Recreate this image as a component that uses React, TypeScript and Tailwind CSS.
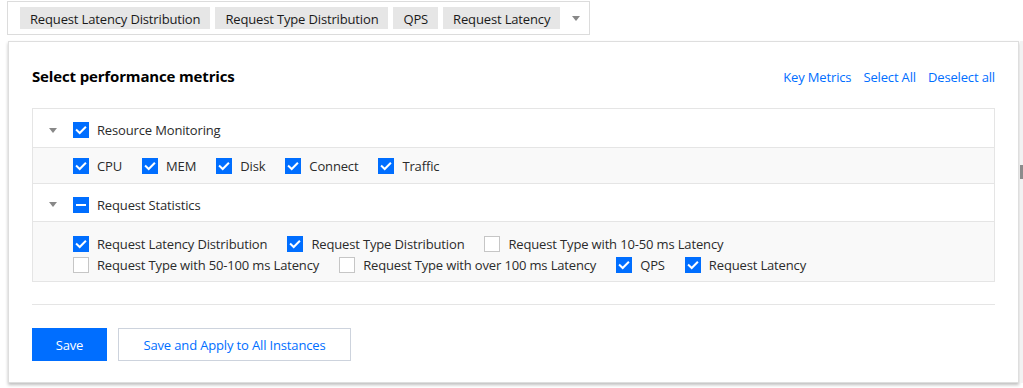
import React from "react"

type CheckState = "checked" | "unchecked" | "indeterminate"

function Checkbox({ state }: { state: CheckState }) {
  if (state === "unchecked") {
    return <span className="box-border block h-4 w-4 shrink-0 border border-[#c6c6c6] bg-white" />
  }
  return (
    <span className="flex h-4 w-4 shrink-0 items-center justify-center bg-[#006eff]">
      {state === "checked" ? (
        <svg width="16" height="16" viewBox="0 0 16 16" fill="none">
          <path d="M3.8 8.2l2.9 2.8 5.5-5.6" stroke="#fff" strokeWidth="2" strokeLinecap="square" />
        </svg>
      ) : (
        <span className="block h-[2px] w-[10px] bg-white" />
      )}
    </span>
  )
}

function CheckItem({ label, state }: { label: string; state: CheckState }) {
  return (
    <label className="mr-5 flex h-[21px] items-center">
      <Checkbox state={state} />
      <span className="ml-2 whitespace-nowrap pt-[2px] text-[#2b2b2b]">{label}</span>
    </label>
  )
}

function Caret() {
  return (
    <svg width="8" height="5" viewBox="0 0 8 5" className="shrink-0">
      <polygon points="0,0 8,0 4,5" fill="#888" />
    </svg>
  )
}

const selectedTags = ["Request Latency Distribution", "Request Type Distribution", "QPS", "Request Latency"]

const resourceItems: { label: string; state: CheckState }[] = [
  { label: "CPU", state: "checked" },
  { label: "MEM", state: "checked" },
  { label: "Disk", state: "checked" },
  { label: "Connect", state: "checked" },
  { label: "Traffic", state: "checked" },
]

const requestItems: { label: string; state: CheckState }[] = [
  { label: "Request Latency Distribution", state: "checked" },
  { label: "Request Type Distribution", state: "checked" },
  { label: "Request Type with 10-50 ms Latency", state: "unchecked" },
  { label: "Request Type with 50-100 ms Latency", state: "unchecked" },
  { label: "Request Type with over 100 ms Latency", state: "unchecked" },
  { label: "QPS", state: "checked" },
  { label: "Request Latency", state: "checked" },
]

export default function App() {
  return (
    <div className="h-[388px] w-[1023px] overflow-hidden bg-white text-[13px] tracking-[-0.15px] font-['Open_Sans',sans-serif]">
      {/* selected metrics */}
      <div className="ml-[7px] mt-[1px] flex h-[34px] w-[583px] items-center border border-[#dcdcdc] bg-white pl-3">
        <div className="flex gap-[5px]">
          {selectedTags.map((tag) => (
            <span key={tag} className="flex h-[22px] items-center bg-[#e6e6e6] px-[10px] pt-[3px] text-[#1a1a1a]">
              {tag}
            </span>
          ))}
        </div>
        <span className="ml-3">
          <Caret />
        </span>
      </div>

      <div className="mt-[6px] flex">
        <div className="ml-[8px] h-[342px] w-[1011px] border border-[#dedede] bg-white px-[23px] pt-[23px] shadow-[0_2px_3px_rgba(0,0,0,0.25)]">
          <div className="flex h-[22px] items-center justify-between">
            <h2 className="text-[15px] font-bold text-black">Select performance metrics</h2>
            <div className="mt-[4px] flex gap-3 text-[#006eff]">
              <span>Key Metrics</span>
              <span>Select All</span>
              <span>Deselect all</span>
            </div>
          </div>

          <div className="mt-[21px] border border-[#e5e5e5]">
            <div className="flex h-[39px] items-center border-b border-[#e5e5e5] pl-4 pt-[4px]">
              <Caret />
              <span className="ml-4 flex items-center">
                <Checkbox state="checked" />
                <span className="ml-2 pt-[2px] text-[#2b2b2b]">Resource Monitoring</span>
              </span>
            </div>
            <div className="flex h-[36px] items-center border-b border-[#e5e5e5] bg-[#f9f9f9] pl-10">
              {resourceItems.map((item) => (
                <CheckItem key={item.label} {...item} />
              ))}
            </div>
            <div className="flex h-[38px] items-center border-b border-[#e5e5e5] pl-4 pt-[4px]">
              <Caret />
              <span className="ml-4 flex items-center">
                <Checkbox state="indeterminate" />
                <span className="ml-2 pt-[2px] text-[#2b2b2b]">Request Statistics</span>
              </span>
            </div>
            <div className="h-[59px] bg-[#f9f9f9] pl-10 pt-[11px]">
              <div className="flex w-[860px] flex-wrap">
                {requestItems.map((item) => (
                  <CheckItem key={item.label} {...item} />
                ))}
              </div>
            </div>
          </div>

          <div className="mt-[22px] h-px bg-[#e5e5e5]" />

          <div className="mt-[23px] flex gap-[11px]">
            <button type="button" className="h-[33px] w-[75px] bg-[#006eff] pt-[3px] text-white">
              Save
            </button>
            <button type="button" className="h-[33px] w-[233px] border border-[#cdd3dd] bg-white pt-[3px] text-[#006eff]">
              Save and Apply to All Instances
            </button>
          </div>
        </div>
        <div className="ml-px w-[3px] bg-[#f2f2f2] pt-[124px]">
          <div className="h-[14px] w-[3px] bg-[#8c8c8c]" />
        </div>
      </div>
    </div>
  )
}
